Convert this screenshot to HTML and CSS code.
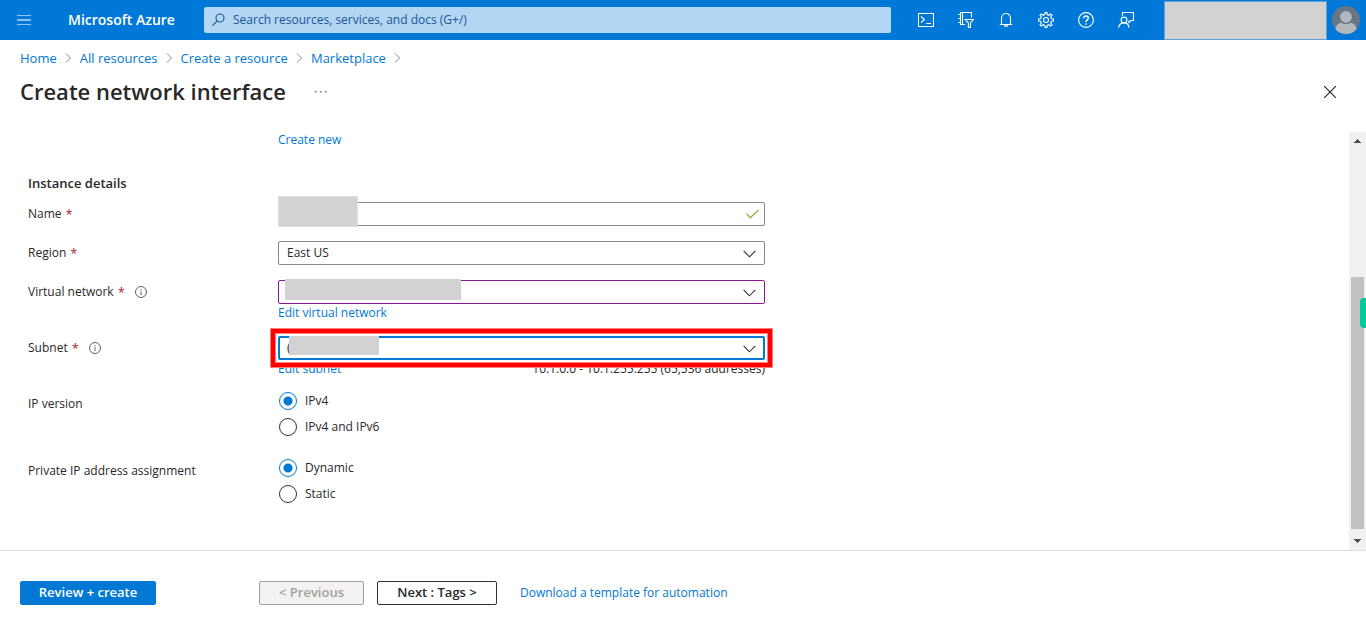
FILE: index.html
```html
<!DOCTYPE html>
<html lang="en">
<head>
<meta charset="utf-8">
<meta name="viewport" content="width=device-width, initial-scale=1">
<title>Create network interface - Microsoft Azure</title>
<link rel="stylesheet" href="styles.css">
</head>
<body>
<header class="topbar">
  <div class="topbar-start">
    <button class="menu-button" type="button" aria-label="Show portal menu">
      <svg width="14" height="10" viewBox="0 0 14 10" shape-rendering="crispEdges"><path d="M0 .5h14M0 5h14M0 9.500h14" stroke="#8cc1ec" stroke-width="1.500"/></svg>
    </button>
    <a class="brand" href="#">Microsoft Azure</a>
  </div>
  <div class="search">
    <svg class="search-icon" width="13" height="14" viewBox="0 0 13 14" fill="none" stroke="#1c5596" stroke-width="1.1"><circle cx="8" cy="5" r="4"/><path d="M5.200 7.900.5 12.600"/></svg>
    <input class="search-input" type="text" aria-label="Search" placeholder="Search resources, services, and docs (G+/)">
  </div>
  <nav class="tools" aria-label="Portal tools">
    <button class="tool" type="button" aria-label="Cloud Shell">
      <svg width="16" height="16" viewBox="0 0 16 16"><path d="M.5 1.500h15v13H.5zM3 4.500 6.500 7.500 3 10.500M8 11.500h5"/></svg>
    </button>
    <button class="tool" type="button" aria-label="Directories and subscriptions">
      <svg width="16" height="16" viewBox="0 0 16 16"><path d="M13.500 5.500v-5H2.500v12H7M4.500.5v12M.3 2.500h2.200M.3 6.500h2.200M.3 10.500h2.200M7.200 7.500h8.200l-3 3.500v4.500h-2V11z"/></svg>
    </button>
    <button class="tool" type="button" aria-label="Notifications">
      <svg width="16" height="16" viewBox="0 0 16 16"><path d="M3.500 12.500V6a4.500 4.500 0 0 1 9 0v6.500M1.800 12.500h12.400M6.300 12.700a1.700 1.700 0 0 0 3.400 0"/></svg>
    </button>
    <button class="tool" type="button" aria-label="Settings">
      <svg width="16" height="16" viewBox="0 0 16 16"><circle cx="8" cy="8" r="2.500"/><path d="M6.800 2.600 7 .6h2l.2 2 1.800.7 1.600-1.300 1.400 1.400-1.300 1.600.7 1.800 2 .2v2l-2 .2-.7 1.800 1.300 1.600-1.400 1.400-1.600-1.300-1.800.7-.2 2H7l-.2-2-1.800-.7L3.400 14 2 12.600 3.300 11l-.7-1.800-2-.2V7l2-.2.7-1.800L2 3.400 3.400 2 5 3.300z"/></svg>
    </button>
    <button class="tool" type="button" aria-label="Help">
      <svg width="16" height="16" viewBox="0 0 16 16"><circle cx="8" cy="8" r="7.400"/><path d="M5.700 6.200C5.700 4.800 6.600 4 8 4s2.300.8 2.300 2c0 1.800-2.300 1.800-2.300 3.700v.3M8 11.300v1.400" stroke-width="1.500"/></svg>
    </button>
    <button class="tool" type="button" aria-label="Feedback">
      <svg width="16" height="16" viewBox="0 0 16 16"><circle cx="6" cy="8" r="2.900"/><path d="M.6 15.800c0-3 2.300-4.900 5.400-4.900s4.700 1.900 5 4.900M4.500 4V.5h11v8H13l-2 2v-2"/></svg>
    </button>
  </nav>
  <div class="account"></div>
  <button class="avatar" type="button" aria-label="Account">
    <svg width="28" height="28" viewBox="0 0 28 28"><defs><clipPath id="avatar-clip"><circle cx="14" cy="14" r="14"/></clipPath></defs><g clip-path="url(#avatar-clip)"><path fill="#687686" d="M0 0h28v28H0z"/><rect x="3.500" y="16.500" width="21" height="17" rx="7" fill="#b3b8bd"/><circle cx="14" cy="11" r="7.300" fill="#687686"/><circle cx="14" cy="10.800" r="5.900" fill="#b3b8bd"/></g></svg>
  </button>
</header>

<nav class="breadcrumb" aria-label="Breadcrumb">
  <a href="#">Home</a><svg class="crumb" viewBox="0 0 7 10"><path d="M1 .5 5.500 5 1 9.500"/></svg>
  <a href="#">All resources</a><svg class="crumb" viewBox="0 0 7 10"><path d="M1 .5 5.500 5 1 9.500"/></svg>
  <a href="#">Create a resource</a><svg class="crumb" viewBox="0 0 7 10"><path d="M1 .5 5.500 5 1 9.500"/></svg>
  <a href="#">Marketplace</a><svg class="crumb" viewBox="0 0 7 10"><path d="M1 .5 5.500 5 1 9.500"/></svg>
</nav>

<div class="title-row">
  <h1 class="title">Create network interface</h1>
  <button class="more" type="button" aria-label="More actions"><svg width="12" height="2" viewBox="0 0 12 2" fill="#777"><path d="M0 0h1.500v1.500H0zM5 0h1.500v1.500H5zM10 0h1.500v1.500H10z"/></svg></button>
  <button class="close" type="button" aria-label="Close"><svg width="12" height="12" viewBox="0 0 12 12" stroke="#222" stroke-width="1.100"><path d="M0 0l12 12M12 0 0 12"/></svg></button>
</div>

<main class="content">
  <form class="form" id="nic-form">
    <div class="row row-link"><a class="below" href="#">Create new</a></div>
    <h2 class="section">Instance details</h2>
    <div class="row">
      <div class="label"><label for="name">Name</label><span class="req">*</span></div>
      <div class="field">
        <input class="control" id="name" type="text">
        <svg class="check" viewBox="0 0 13 10"><path d="M.6 4.800 4.500 8.700 12.500.8"/></svg>
        <span class="mask mask-name"></span>
      </div>
    </div>
    <div class="row">
      <div class="label"><label for="region">Region</label><span class="req">*</span></div>
      <div class="field">
        <select class="control" id="region"><option>East US</option></select>
        <svg class="chevron" viewBox="0 0 14 8"><path d="M.7.700 7 7 13.300.7"/></svg>
      </div>
    </div>
    <div class="row">
      <div class="label"><label for="vnet">Virtual network</label><span class="req">*</span><svg class="info" viewBox="0 0 12 12"><circle cx="6" cy="6" r="5.500"/><path d="M6 5.200v4M6 3v1.200"/></svg></div>
      <div>
        <div class="field">
          <select class="control control-changed" id="vnet"><option></option></select>
          <svg class="chevron" viewBox="0 0 14 8"><path d="M.7.700 7 7 13.300.7"/></svg>
          <span class="mask mask-vnet"></span>
        </div>
        <div class="notes"><a href="#">Edit virtual network</a></div>
      </div>
    </div>
    <div class="row">
      <div class="label"><label for="subnet">Subnet</label><span class="req">*</span><svg class="info" viewBox="0 0 12 12"><circle cx="6" cy="6" r="5.500"/><path d="M6 5.200v4M6 3v1.200"/></svg></div>
      <div>
        <div class="field">
          <select class="control control-active" id="subnet"><option>(</option></select>
          <svg class="chevron" viewBox="0 0 14 8"><path d="M.7.700 7 7 13.300.7"/></svg>
          <span class="mask mask-subnet"></span>
          <span class="highlight"></span>
        </div>
        <div class="notes"><a href="#">Edit subnet</a><span>10.1.0.0 - 10.1.255.255 (65,536 addresses)</span></div>
      </div>
    </div>
    <div class="row row-radios" role="radiogroup" aria-labelledby="ipv">
      <div class="label" id="ipv">IP version</div>
      <div class="radios">
        <label class="option"><input type="radio" name="ipv" checked>IPv4</label>
        <label class="option"><input type="radio" name="ipv">IPv4 and IPv6</label>
      </div>
    </div>
    <div class="row row-radios" role="radiogroup" aria-labelledby="assign">
      <div class="label" id="assign">Private IP address assignment</div>
      <div class="radios">
        <label class="option"><input type="radio" name="assign" checked>Dynamic</label>
        <label class="option"><input type="radio" name="assign">Static</label>
      </div>
    </div>
  </form>
  <div class="scrollbar" aria-hidden="true">
    <svg width="7" height="4" viewBox="0 0 7 4" shape-rendering="crispEdges"><path d="M0 4 3.500 0 7 4z" fill="#505050"/></svg>
    <div class="track"><div class="thumb"></div></div>
    <svg width="7" height="4" viewBox="0 0 7 4" shape-rendering="crispEdges"><path d="M0 0h7L3.500 4z" fill="#505050"/></svg>
    <span class="side-tab"></span>
  </div>
</main>

<footer class="footer">
  <button class="btn btn-primary" type="submit" form="nic-form">Review + create</button>
  <button class="btn btn-previous" type="button" disabled>&lt; Previous</button>
  <button class="btn btn-next" type="button">Next : Tags &gt;</button>
  <a class="download" href="#">Download a template for automation</a>
</footer>
</body>
</html>
```
FILE: styles.css
```css
* { box-sizing: border-box; }

body {
  margin: 0;
  min-height: 100vh;
  display: flex;
  flex-direction: column;
  background: #fff;
  color: #292827;
  font: 12px/16px "Segoe UI", "Open Sans", "Noto Sans", sans-serif;
}

a { color: #0078d4; text-decoration: none; }
button, input, select { font: inherit; color: inherit; }
button { padding: 0; border: 0; background: none; cursor: pointer; }
svg { display: block; flex: none; }

/* Top bar */
.topbar {
  display: flex;
  align-items: center;
  height: 40px;
  padding-right: 6px;
  background: #0078d7;
}
.topbar-start { display: flex; align-items: center; flex: none; width: 204px; }
.menu-button { display: grid; place-items: center; width: 48px; height: 40px; }
.brand { margin-left: 20px; color: #fff; font-size: 14px; font-weight: 600; white-space: nowrap; }
.search {
  display: flex;
  align-items: center;
  flex: 1;
  gap: 8px;
  height: 26px;
  padding: 0 8px;
  border-radius: 2px;
  background: #b2d6f3;
}
.search-input { flex: 1; min-width: 0; padding: 0; border: 0; outline: 0; background: none; }
.search-input::placeholder { color: #1c5596; opacity: 1; }
.tools { display: flex; flex: none; margin: 0 18px 0 15px; }
.tool { display: grid; place-items: center; width: 40px; height: 40px; }
.tool svg { fill: none; stroke: #fff; stroke-width: 1.1; }
.account { flex: none; width: 163px; height: 39px; border: 1px solid #5ba1dc; background: #d2d2d2; }
.avatar { flex: none; margin-left: 5px; }

/* Page heading */
.breadcrumb { display: flex; align-items: center; gap: 8px; padding: 10px 20px 0; font-size: 13px; }
.crumb { width: 7px; height: 10px; fill: none; stroke: #8a8886; }
.title-row { display: flex; align-items: center; height: 32px; margin: 10px 30px 24px 20px; }
.title { margin: 0; padding-bottom: 2px; font-size: 22px; line-height: 30px; font-weight: 600; }
.more { margin-left: 29px; padding: 8px 0; }
.close { margin-left: auto; }

/* Form */
.content { display: flex; flex: 1; }
.form { flex: 1; padding: 0 28px; }
.row { display: grid; grid-template-columns: 250px minmax(0, 487px); margin-bottom: 15px; }
.row-link { margin-bottom: 27px; }
.below { grid-column: 2; }
.section { margin: 0 0 11px; font-size: 13px; line-height: 16px; font-weight: 600; }
.label { display: flex; align-items: center; height: 16px; margin-top: 4px; }
.req { margin-left: 4px; color: #a4262c; font-size: 13px; }
.info { width: 12px; height: 12px; margin-left: 10px; fill: none; stroke: #605e5c; }
.field { position: relative; }
.control {
  display: block;
  width: 100%;
  height: 24px;
  padding: 0 32px 0 8px;
  border: 1px solid #8a8886;
  border-radius: 2px;
  outline: 0;
  background: #fff;
  appearance: none;
}
.control-changed { border-color: #881798; }
.control-active { padding-left: 7px; border: 2px solid #0078d4; }
.chevron, .check { position: absolute; pointer-events: none; fill: none; }
.chevron { top: 9px; right: 9px; width: 13px; height: 8px; stroke: #323130; stroke-width: 1.2; }
.check { top: 7px; right: 6px; width: 13px; height: 10px; stroke: #73aa24; stroke-width: 1.1; }
.mask { position: absolute; background: #d2d2d2; }
.mask-name { top: -6px; left: 0; width: 80px; height: 31px; border: 1px solid #dedede; }
.mask-vnet { top: -1px; left: 7px; width: 176px; height: 21px; }
.mask-subnet { top: 0; left: 11px; width: 90px; height: 19px; }
.highlight {
  position: absolute;
  inset: -7px;
  border: 4px solid #f00;
  box-shadow: 0 0 0 1px #ff8080, inset 0 0 0 1px #ff8080;
  pointer-events: none;
}
.notes { display: flex; justify-content: space-between; margin-top: 1px; }
.row-radios { margin-bottom: 23px; }
.radios { display: grid; gap: 8px; justify-items: start; }
.option { display: flex; align-items: center; gap: 8px; height: 18px; margin-left: 1px; }
.option input {
  width: 18px;
  height: 18px;
  margin: 0;
  border: 1px solid #323130;
  border-radius: 50%;
  background: #fff;
  appearance: none;
}
.option input:checked { border-color: #0078d4; background: radial-gradient(circle, #0078d4 4px, #fff 5px); }

/* Scrollbar */
.scrollbar {
  position: relative;
  display: flex;
  flex-direction: column;
  align-items: center;
  width: 17px;
  padding: 7px 0;
  background: #f1f1f1;
}
.track { display: flex; align-items: flex-end; flex: 1; width: 13px; padding: 10px 0; }
.thumb { width: 100%; height: 67%; background: #c1c1c1; }
.side-tab { position: absolute; top: 166px; right: 0; width: 6px; height: 30px; border-radius: 4px 0 0 4px; background: #00cc9b; }

/* Footer */
.footer { display: flex; align-items: center; height: 75px; padding: 10px 20px 0; border-top: 1px solid #dcdcdc; }
.btn { height: 24px; padding-bottom: 2px; border: 1px solid #323130; border-radius: 2px; font-size: 13px; font-weight: 600; }
.btn-primary { width: 136px; border-color: #0078d4; background: #0078d4; color: #fff; }
.btn-previous { width: 105px; margin-left: 103px; border-color: #a19f9d; background: #f3f2f1; color: #a19f9d; cursor: default; }
.btn-next { width: 120px; margin-left: 13px; }
.download { margin-left: 23px; }
```
